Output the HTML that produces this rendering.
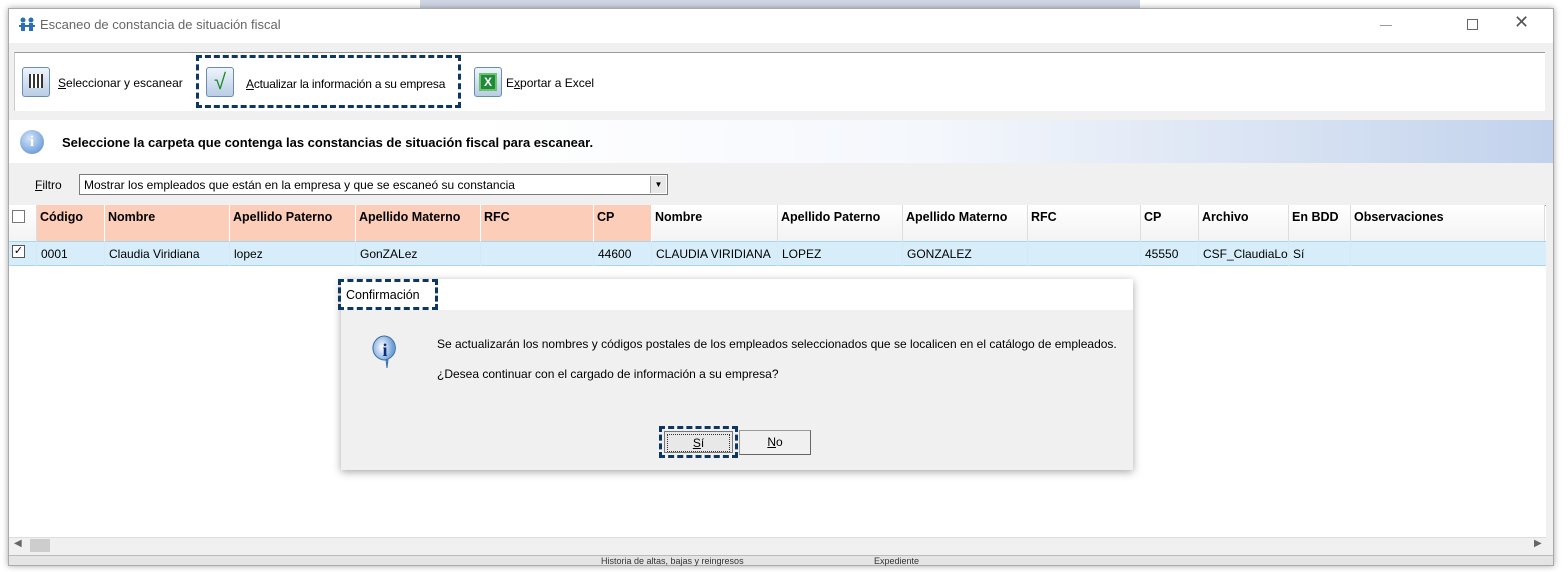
<!DOCTYPE html>
<html><head><meta charset="utf-8"><style>
*{box-sizing:border-box;margin:0;padding:0}
body{width:1568px;height:572px;background:#fff;position:relative;overflow:hidden;font-family:"Liberation Sans",sans-serif;font-size:12px;color:#000}
.abs{position:absolute}
.win{left:8px;top:8px;width:1546px;height:558px;background:#f0f0f0;border:1px solid #aaa;box-shadow:0 0 6px rgba(0,0,0,.35)}
.dash{border:3px dashed #0d3763}
.hd{position:absolute;top:205px;height:36px;background:#fccdb8;border-right:1px solid #fff;font-weight:bold;font-size:12.5px;padding:5px 3px}
.hd.w{background:linear-gradient(#fff,#f3f3f3);border-right:1px solid #ddd}
.cl{position:absolute;top:241px;height:25px;padding:6px 4px;border-right:1px solid #d6e8f2;font-size:12px}
</style></head><body>
<div class="abs" style="left:420px;top:0;width:720px;height:8px;background:#cfd6e4"></div>
<div class="abs win"></div>
<!-- title -->
<div class="abs" style="left:9px;top:9px;width:1544px;height:34px;background:#fff"></div>
<svg class="abs" style="left:18px;top:17px" width="18" height="14" viewBox="0 0 18 14"><circle cx="5" cy="3" r="2.5" fill="#2a6fb8"/><circle cx="13" cy="3" r="2.5" fill="#2a6fb8"/><rect x="3" y="6" width="4" height="8" fill="#2a6fb8"/><rect x="11" y="6" width="4" height="8" fill="#2a6fb8"/><rect x="1" y="8" width="16" height="2" fill="#2a6fb8"/></svg>
<div class="abs" style="left:40px;top:17px;font-size:13px;color:#666">Escaneo de constancia de situación fiscal</div>
<div class="abs" style="left:1380px;top:25px;width:12px;height:1px;background:#999"></div>
<div class="abs" style="left:1467px;top:19px;width:11px;height:11px;border:1px solid #666"></div>
<div class="abs" style="left:1514px;top:12px;font-size:18px;color:#555;font-weight:300">✕</div>
<!-- toolbar -->
<div class="abs" style="left:14px;top:52px;width:1531px;height:59px;background:#fff;border-top:1px solid #999;border-left:1px solid #ccc"></div>
<div class="abs" style="left:22px;top:67px;width:28px;height:30px;border:1px solid #6b8bb0;border-radius:3px;background:linear-gradient(#eef4fb,#b9cde4)"><div style="margin:6px auto;width:14px;height:14px;background:repeating-linear-gradient(90deg,#333 0 2px,#fff 2px 4px)"></div></div>
<div class="abs" style="left:58px;top:76px;font-size:12px"><u>S</u>eleccionar y escanear</div>
<div class="abs dash" style="left:196px;top:55px;width:265px;height:53px"></div>
<div class="abs" style="left:206px;top:67px;width:28px;height:30px;border:1px solid #6b8bb0;border-radius:3px;background:linear-gradient(#eef4fb,#b9cde4);color:#1a8c2a;font-size:22px;text-align:center;line-height:28px">√</div>
<div class="abs" style="left:246px;top:77px;font-size:12px;letter-spacing:-0.2px"><u>A</u>ctualizar la información a su empresa</div>
<div class="abs" style="left:474px;top:67px;width:28px;height:30px;border:1px solid #6b8bb0;border-radius:3px;background:linear-gradient(#eef4fb,#b9cde4)"><div style="margin:5px auto;width:18px;height:18px;background:#1e8a3a;border:2px solid #6bc36b;color:#fff;font-weight:bold;font-size:12px;text-align:center;line-height:14px">X</div></div>
<div class="abs" style="left:506px;top:76px;font-size:12px">E<u>x</u>portar a Excel</div>
<!-- banner -->
<div class="abs" style="left:9px;top:120px;width:1544px;height:43px;background:linear-gradient(90deg,#fff 30%,#f4f7fc 60%,#c2d2ec)"></div>
<div class="abs" style="left:20px;top:130px;width:24px;height:24px;border-radius:50%;background:radial-gradient(circle at 40% 35%,#d6e6fa,#4d86cf);color:#fff;font-weight:bold;font-size:15px;text-align:center;line-height:24px;font-family:'Liberation Serif',serif">i</div>
<div class="abs" style="left:62px;top:135px;font-weight:bold;font-size:13px">Seleccione la carpeta que contenga las constancias de situación fiscal para escanear.</div>
<!-- filter -->
<div class="abs" style="left:35px;top:178px;font-size:12px"><u>F</u>iltro</div>
<div class="abs" style="left:79px;top:174px;width:589px;height:21px;background:#fff;border:1px solid #7a7a7a;font-size:12px;padding:3px 4px">Mostrar los empleados que están en la empresa y que se escaneó su constancia</div>
<div class="abs" style="left:650px;top:176px;width:16px;height:17px;background:#e8e8e8;border-left:1px solid #aaa;font-size:8px;text-align:center;line-height:17px">▼</div>
<!-- grid -->
<div class="abs" style="left:9px;top:205px;width:1537px;height:332px;background:#fff;border-top:1px solid #999"></div>
<div class="hd w" style="left:9px;width:28px"><div style="width:13px;height:13px;border:1px solid #777;background:#fff"></div></div>
<div class="hd" style="left:37px;width:68px">Código</div>
<div class="hd" style="left:105px;width:125px">Nombre</div>
<div class="hd" style="left:230px;width:126px">Apellido Paterno</div>
<div class="hd" style="left:356px;width:125px">Apellido Materno</div>
<div class="hd" style="left:481px;width:113px">RFC</div>
<div class="hd" style="left:594px;width:58px">CP</div>
<div class="hd w" style="left:652px;width:126px">Nombre</div>
<div class="hd w" style="left:778px;width:125px">Apellido Paterno</div>
<div class="hd w" style="left:903px;width:125px">Apellido Materno</div>
<div class="hd w" style="left:1028px;width:113px">RFC</div>
<div class="hd w" style="left:1141px;width:58px">CP</div>
<div class="hd w" style="left:1199px;width:90px">Archivo</div>
<div class="hd w" style="left:1289px;width:62px">En BDD</div>
<div class="hd w" style="left:1351px;width:194px">Observaciones</div>
<div class="abs" style="left:9px;top:241px;width:1537px;height:25px;background:#d7eefa;border-top:1px solid #a9d6ef;border-bottom:1px solid #a9d6ef"></div>
<div class="cl" style="left:9px;width:28px;padding:4px 3px"><div style="width:13px;height:13px;border:1px solid #555;background:#fff;font-size:11px;line-height:11px;text-align:center">✓</div></div>
<div class="cl" style="left:37px;width:68px">0001</div>
<div class="cl" style="left:105px;width:125px">Claudia Viridiana</div>
<div class="cl" style="left:230px;width:126px">lopez</div>
<div class="cl" style="left:356px;width:125px">GonZALez</div>
<div class="cl" style="left:481px;width:113px"></div>
<div class="cl" style="left:594px;width:58px">44600</div>
<div class="cl" style="left:652px;width:126px">CLAUDIA VIRIDIANA</div>
<div class="cl" style="left:778px;width:125px">LOPEZ</div>
<div class="cl" style="left:903px;width:125px">GONZALEZ</div>
<div class="cl" style="left:1028px;width:113px"></div>
<div class="cl" style="left:1141px;width:58px">45550</div>
<div class="cl" style="left:1199px;width:90px">CSF_ClaudiaLo</div>
<div class="cl" style="left:1289px;width:62px">Sí</div>
<!-- scrollbar -->
<div class="abs" style="left:9px;top:537px;width:1537px;height:17px;background:#f0f0f0;border-top:1px solid #ddd"></div>
<div class="abs" style="left:14px;top:538px;font-size:10px;color:#666">◀</div>
<div class="abs" style="left:30px;top:539px;width:20px;height:13px;background:#cdcdcd"></div>
<div class="abs" style="left:1534px;top:538px;font-size:10px;color:#666">▶</div>
<div class="abs" style="left:9px;top:555px;width:1544px;height:10px;background:#e4e4e4;border-top:1px solid #bbb;font-size:9px;color:#333"><span style="position:absolute;left:592px;top:0">Historia de altas, bajas y reingresos</span><span style="position:absolute;left:865px;top:0">Expediente</span></div>
<!-- dialog -->
<div class="abs" style="left:341px;top:279px;width:792px;height:191px;background:#f0f0f0;box-shadow:0 2px 8px rgba(0,0,0,.35)"></div>
<div class="abs" style="left:341px;top:279px;width:792px;height:31px;background:#fff"></div>
<div class="abs dash" style="left:338px;top:279px;width:100px;height:31px"></div>
<div class="abs" style="left:346px;top:288px;font-size:12.5px">Confirmación</div>
<svg class="abs" style="left:370px;top:334px" width="30" height="40" viewBox="0 0 30 40"><defs><radialGradient id="g" cx="40%" cy="35%"><stop offset="0" stop-color="#fff"/><stop offset="1" stop-color="#6d9fd8"/></radialGradient></defs><path d="M15 2a12 12 0 1 0 3 23.6L17 34l-1-8.4A12 12 0 0 0 15 2z" fill="url(#g)" stroke="#3d6fa8"/><text x="15" y="22" text-anchor="middle" font-family="Liberation Serif" font-weight="bold" font-size="18" fill="#0c2f7a">i</text></svg>
<div class="abs" style="left:437px;top:337px;font-size:12px">Se actualizarán los nombres y códigos postales de los empleados seleccionados que se localicen en el catálogo de empleados.</div>
<div class="abs" style="left:437px;top:367px;font-size:12px">¿Desea continuar con el cargado de información a su empresa?</div>
<div class="abs dash" style="left:659px;top:426px;width:79px;height:32px"></div>
<div class="abs" style="left:664px;top:431px;width:69px;height:22px;border:1px solid #777;background:#e8e8e8;text-align:center;line-height:20px"><div style="margin:2px;border:1px dotted #333;line-height:16px"><u>S</u>í</div></div>
<div class="abs" style="left:739px;top:430px;width:72px;height:25px;border:1px solid #999;border-right-color:#666;border-bottom-color:#666;background:#f0f0f0;text-align:center;line-height:23px"><u>N</u>o</div>
</body></html>
